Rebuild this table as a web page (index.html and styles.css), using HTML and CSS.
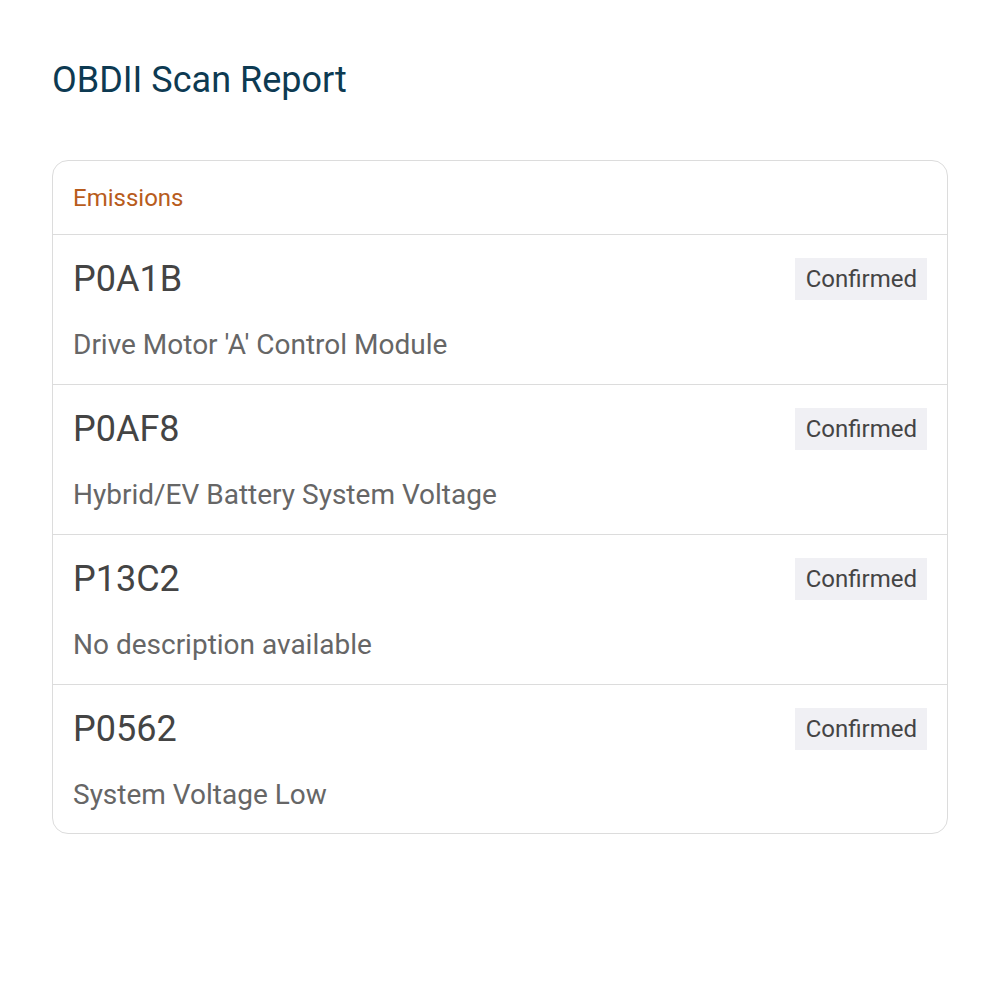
FILE: index.html
```html
<!DOCTYPE html>
<html>
<head>
<meta charset="utf-8">
<link rel="stylesheet" href="styles.css">
</head>
<body>
<main class="page">
  <h1 class="title">OBDII Scan Report</h1>
  <section class="card">
    <div class="card-header">Emissions</div>
    <div class="row">
      <div class="row-top"><span class="code">P0A1B</span><span class="badge">Confirmed</span></div>
      <div class="desc">Drive Motor 'A' Control Module</div>
    </div>
    <div class="row">
      <div class="row-top"><span class="code">P0AF8</span><span class="badge">Confirmed</span></div>
      <div class="desc">Hybrid/EV Battery System Voltage</div>
    </div>
    <div class="row">
      <div class="row-top"><span class="code">P13C2</span><span class="badge">Confirmed</span></div>
      <div class="desc">No description available</div>
    </div>
    <div class="row">
      <div class="row-top"><span class="code">P0562</span><span class="badge">Confirmed</span></div>
      <div class="desc">System Voltage Low</div>
    </div>
  </section>
</main>
</body>
</html>
```
FILE: styles.css
```css
html, body {
  margin: 0;
  padding: 0;
  background: #ffffff;
  font-family: Roboto, "Noto Sans", sans-serif;
}
.page {
  padding: 56px 52px;
}
.title {
  margin: 0;
  font-size: 36px;
  font-weight: 400;
  line-height: 48px;
  color: #0d3a52;
}
.card {
  margin-top: 56px;
  border: 1px solid #dcdcdc;
  border-radius: 16px;
  overflow: hidden;
}
.card-header {
  height: 73px;
  display: flex;
  align-items: center;
  padding: 0 20px;
  font-size: 24px;
  color: #b85c1c;
  border-bottom: 1px solid #dcdcdc;
}
.row {
  height: 149px;
  padding: 0 20px;
  border-bottom: 1px solid #dcdcdc;
  display: flex;
  flex-direction: column;
}
.row:last-child {
  border-bottom: none;
  height: 148px;
}
.row-top {
  display: flex;
  justify-content: space-between;
  align-items: center;
  margin-top: 23px;
  height: 42px;
}
.code {
  font-size: 36px;
  color: #444444;
}
.badge {
  background: #f0f0f4;
  color: #444444;
  font-size: 24px;
  height: 42px;
  line-height: 42px;
  padding: 0 10px 0 11px;
}
.desc {
  margin-top: 27px;
  font-size: 28px;
  color: #666666;
  line-height: 36px;
}
```
